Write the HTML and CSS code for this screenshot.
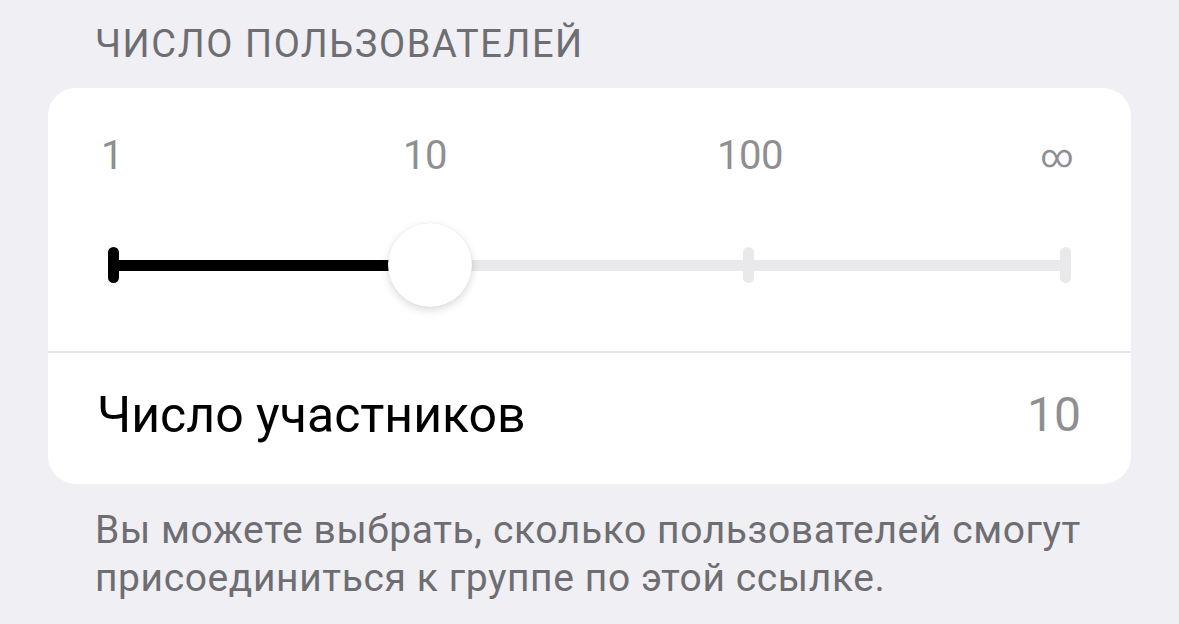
FILE: index.html
```html
<!DOCTYPE html>
<html>
<head>
  <title>Число пользователей</title>
  <link rel="stylesheet" href="styles.css">
</head>
<body>
  <div class="section">
    <div class="section-header">ЧИСЛО ПОЛЬЗОВАТЕЛЕЙ</div>

    <div class="card">
      <div class="slider-block">
        <div class="slider-labels">
          <span class="slider-label">1</span>
          <span class="slider-label">10</span>
          <span class="slider-label">100</span>
          <span class="slider-label infinity">∞</span>
        </div>

        <div class="track">
          <span class="tick active"></span>
          <span class="segment active"></span>
          <span class="tick"></span>
          <span class="segment"></span>
          <span class="tick"></span>
          <span class="segment"></span>
          <span class="tick"></span>
          <span class="thumb"></span>
        </div>
      </div>

      <div class="row">
        <span class="row-title">Число участников</span>
        <span class="row-value">10</span>
      </div>
    </div>

    <div class="section-footer">
      Вы можете выбрать, сколько пользователей смогут присоединиться к группе по этой ссылке.
    </div>
  </div>
</body>
</html>
```

FILE: styles.css
```css
html, body {
  margin: 0;
  padding: 0;
  background-color: #efeff4;
  font-family: Roboto, "Noto Sans", Arial, sans-serif;
  height: 100vh;
  overflow: hidden;
}

.section {
  padding: 20px 48px 0 48px;
}

.section-header {
  padding-left: 47px;
  font-size: 38px;
  letter-spacing: 1.6px;
  line-height: 48px;
  color: #6d6d72;
  height: 68px;
}

.card {
  background: #fff;
  border-radius: 28px;
  overflow: hidden;
}

/* labels + track */
.slider-block {
  padding-top: 45px;
  height: 218px;
  border-bottom: 2px solid #e3e3e6;
}

.slider-labels {
  display: grid;
  grid-template-columns: 313px 325px 307px 80px;
  padding-left: 24px;
}

.slider-label {
  width: 80px;
  text-align: center;
  font-size: 40px;
  letter-spacing: -0.5px;
  line-height: 46px;
  color: #8e8e93;
}

.slider-label.infinity {
  font-size: 32px;
}

.track {
  position: relative;
  display: flex;
  align-items: center;
  margin: 68px 63px 0 63px;
  height: 36px;
}

.segment {
  flex: 1;
  height: 11px;
  background: #e9e9eb;
}

.segment.active {
  background: #000;
}

.tick {
  width: 11px;
  height: 36px;
  border-radius: 6px;
  background: #e9e9eb;
  margin: 0 -3px;
  position: relative;
  z-index: 1;
}

.tick.active {
  background: #000;
}

.thumb {
  position: absolute;
  left: calc(33.33% - 42px);
  top: 50%;
  width: 84px;
  height: 84px;
  margin-top: -42px;
  border-radius: 50%;
  background: #fff;
  box-shadow: 0 3px 8px rgba(0, 0, 0, 0.15), 0 0 1px rgba(0, 0, 0, 0.12);
  z-index: 2;
}

.row {
  display: flex;
  justify-content: space-between;
  align-items: center;
  height: 124px;
  padding: 0 50px 7px 49px;
  line-height: 60px;
}

.row-title {
  font-size: 50px;
  color: #000;
}

.row-value {
  font-size: 48px;
  color: #8e8e93;
}

.section-footer {
  padding: 22px 0 0 47px;
  font-size: 39px;
  letter-spacing: 0.6px;
  line-height: 48px;
  color: #6d6d72;
}
```
